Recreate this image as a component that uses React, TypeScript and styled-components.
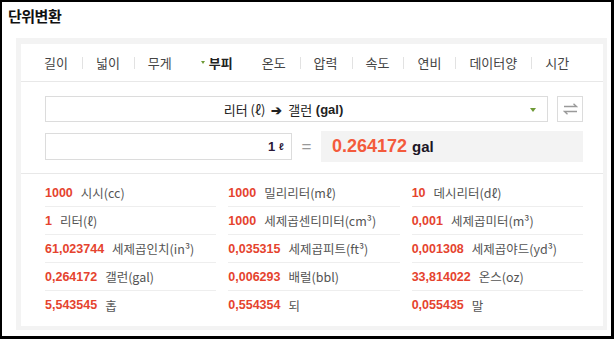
import React from "react";
import styled, { createGlobalStyle } from "styled-components";

const GlobalStyle = createGlobalStyle`
  html, body {
    margin: 0;
    padding: 0;
    background: #fff;
  }
  * {
    box-sizing: border-box;
  }
`;

const FONT = `"Liberation Sans", "Noto Sans CJK KR", sans-serif`;
const KFONT = `"Noto Sans CJK KR", "Liberation Sans", sans-serif`;

const Frame = styled.div`
  width: 614px;
  height: 339px;
  border: 2px solid #000;
  border-right-width: 3px;
  border-bottom-width: 3px;
  background: #fff;
  display: flex;
  flex-direction: column;
  font-family: ${KFONT};
  color: #333;
`;

const Title = styled.h1`
  margin: 0;
  padding: 4px 0 0 6px;
  height: 36px;
  font-size: 15px;
  line-height: 20px;
  font-weight: 700;
  color: #111;
  letter-spacing: -0.5px;
`;

const Panel = styled.div`
  margin: 0 4px 0 14px;
  height: 292px;
  background: #f3f3f3;
  padding: 6px 4px 4px 5px;
`;

const Card = styled.div`
  height: 100%;
  background: #fff;
  display: flex;
  flex-direction: column;
`;

const TabBar = styled.ul`
  list-style: none;
  margin: 0;
  padding: 0 0 0 9px;
  height: 38px;
  display: flex;
  align-items: center;
  border-bottom: 1px solid #e8e8e8;
`;

const Tab = styled.li<{ $active?: boolean }>`
  position: relative;
  display: flex;
  align-items: center;
  gap: 4px;
  padding: 0 ${({ $active }) => ($active ? "15px" : "14px")};
  font-size: 13px;
  line-height: 20px;
  font-weight: ${({ $active }) => ($active ? 700 : 400)};
  color: ${({ $active }) => ($active ? "#222" : "#444")};

  & + &::before {
    content: "";
    position: absolute;
    left: 0;
    top: 4px;
    width: 1px;
    height: 12px;
    background: #e2e2e2;
  }
`;

const Caret = styled.span<{ $size?: number }>`
  display: inline-block;
  width: 0;
  height: 0;
  border-left: ${({ $size = 3 }) => $size}px solid transparent;
  border-right: ${({ $size = 3 }) => $size}px solid transparent;
  border-top: ${({ $size = 3 }) => $size + 1}px solid #6e9a36;
`;

const Converter = styled.section`
  padding: 14px 20px 11px 24px;
  border-bottom: 1px solid #e8e8e8;
  display: flex;
  flex-direction: column;
  gap: 9px;
`;

const SelectRow = styled.div`
  display: flex;
  gap: 9px;
`;

const Select = styled.div`
  position: relative;
  flex: 1;
  height: 26px;
  border: 1px solid #dcdcdc;
  display: flex;
  align-items: center;
  justify-content: center;
  padding-right: 26px;
  font-size: 13px;
  color: #222;
  font-family: ${KFONT};

  b {
    font-family: ${FONT};
    font-weight: 700;
  }

  ${Caret} {
    position: absolute;
    right: 11px;
    top: 11px;
  }
`;

const Arrow = styled.span`
  margin: 0 6px;
  font-weight: 700;
  font-size: 13px;
`;

const SwapButton = styled.button`
  width: 26px;
  height: 26px;
  padding: 0;
  border: 1px solid #dcdcdc;
  background: #fff;
  display: flex;
  align-items: center;
  justify-content: center;
`;

const InputRow = styled.div`
  display: flex;
  align-items: center;
`;

const Input = styled.div`
  width: 247px;
  height: 27px;
  border: 1px solid #dcdcdc;
  display: flex;
  align-items: center;
  justify-content: flex-end;
  padding-right: 7px;
  font-family: ${FONT};
  font-weight: 700;
  font-size: 13px;
  color: #2a1838;

  small {
    font-size: 10px;
    margin-left: 4px;
  }
`;

const Equals = styled.span`
  width: 29px;
  text-align: center;
  font-family: ${FONT};
  font-size: 17px;
  color: #999;
`;

const Result = styled.div`
  flex: 1;
  height: 31px;
  background: #f3f3f3;
  display: flex;
  align-items: center;
  padding-left: 11px;
  font-family: ${FONT};
  font-weight: 700;
`;

const ResultValue = styled.span`
  font-size: 18px;
  color: #f35a3c;
`;

const ResultUnit = styled.span`
  font-size: 15px;
  margin-left: 5px;
  color: #1c1626;
`;

const Grid = styled.ul`
  list-style: none;
  margin: 0;
  padding: 5px 20px 0 24px;
  display: grid;
  grid-template-columns: repeat(3, 1fr);
  column-gap: 12px;
`;

const Item = styled.li<{ $last?: boolean }>`
  height: 28px;
  display: flex;
  align-items: center;
  border-bottom: ${({ $last }) => ($last ? "none" : "1px solid #eeeeee")};
  white-space: nowrap;
`;

const Num = styled.span`
  font-family: ${FONT};
  font-weight: 700;
  font-size: 12.5px;
  color: #e5432e;
`;

const Unit = styled.span`
  margin-left: 8px;
  font-family: ${KFONT};
  font-size: 12.5px;
  color: #555;
`;

const tabs = ["길이", "넓이", "무게", "부피", "온도", "압력", "속도", "연비", "데이터양", "시간"];

const results: [string, string][] = [
  ["1000", "시시(cc)"],
  ["1000", "밀리리터(mℓ)"],
  ["10", "데시리터(dℓ)"],
  ["1", "리터(ℓ)"],
  ["1000", "세제곱센티미터(cm³)"],
  ["0,001", "세제곱미터(m³)"],
  ["61,023744", "세제곱인치(in³)"],
  ["0,035315", "세제곱피트(ft³)"],
  ["0,001308", "세제곱야드(yd³)"],
  ["0,264172", "갤런(gal)"],
  ["0,006293", "배럴(bbl)"],
  ["33,814022", "온스(oz)"],
  ["5,543545", "홉"],
  ["0,554354", "되"],
  ["0,055435", "말"],
];

const SwapIcon = () => (
  <svg width="15" height="12" viewBox="0 0 15 12" fill="none" stroke="#9a9a9a" strokeWidth="1.4">
    <path d="M1 3.5H13.5L10.5 0.8" />
    <path d="M14 8.5H1.5L4.5 11.2" />
  </svg>
);

export default function App() {
  return (
    <>
      <GlobalStyle />
      <Frame>
        <Title>단위변환</Title>
        <Panel>
          <Card>
            <TabBar>
              {tabs.map((t) => (
                <Tab key={t} $active={t === "부피"}>
                  {t === "부피" && <Caret $size={2.5} />}
                  {t}
                </Tab>
              ))}
            </TabBar>
            <Converter>
              <SelectRow>
                <Select>
                  리터 (ℓ)<Arrow>➔</Arrow>갤런 <b>&nbsp;(gal)</b>
                  <Caret />
                </Select>
                <SwapButton aria-label="swap">
                  <SwapIcon />
                </SwapButton>
              </SelectRow>
              <InputRow>
                <Input>
                  1<small>ℓ</small>
                </Input>
                <Equals>=</Equals>
                <Result>
                  <ResultValue>0.264172</ResultValue>
                  <ResultUnit>gal</ResultUnit>
                </Result>
              </InputRow>
            </Converter>
            <Grid>
              {results.map(([n, u], i) => (
                <Item key={u} $last={i >= results.length - 3}>
                  <Num>{n}</Num>
                  <Unit>{u}</Unit>
                </Item>
              ))}
            </Grid>
          </Card>
        </Panel>
      </Frame>
    </>
  );
}
